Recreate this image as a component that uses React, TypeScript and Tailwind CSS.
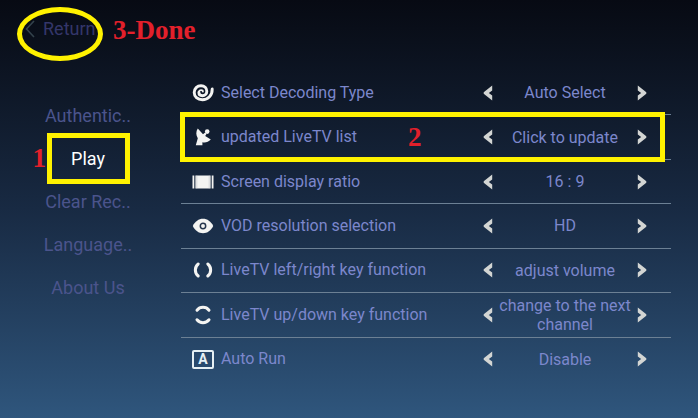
import type { ReactNode } from "react";

interface SettingRowProps {
  icon: ReactNode;
  label: string;
  value: string;
  step?: string;
}

const menu = ["Authentic..", "Play", "Clear Rec..", "Language..", "About Us"];

const SpiralIcon = () => (
  <svg viewBox="0 0 22 20" className="h-5 w-[22px]" fill="none" stroke="#f4f4f2" strokeLinecap="round">
    <path d="M20.2 6C20.4 12.4 16 16.8 10.4 16.8C5.4 16.8 2.2 13.6 2.2 9.5C2.2 5.5 5.2 2.7 9 2.7C12.6 2.7 14.8 5.1 14.8 8.2C14.8 11 12.8 12.7 10.4 12.7C8.2 12.7 6.9 11.3 6.9 9.5" strokeWidth="2.9" />
    <path d="M6.9 9.5C6.9 8 7.9 7.1 9.2 7.1C10.2 7.1 10.9 7.7 10.9 8.6" strokeWidth="1.8" />
  </svg>
);

const DishIcon = () => (
  <svg viewBox="0 0 20 20" className="size-5" fill="#f4f4f2">
    <path d="M4.8 1.6C2.8 4.6 2.8 8.4 4.8 11.2L2.8 18.2H9.4L9.4 15.2C12 15.9 15.4 15.2 17.8 12.6L12.2 9L13.6 6.8L12.2 5.6L10 7.2Z" />
    <circle cx="14.2" cy="4.6" r="2.3" />
  </svg>
);

const ScreenIcon = () => (
  <svg viewBox="0 0 22 14" className="h-[14px] w-[22px]" fill="#f4f4f2">
    <rect x="0.5" y="0.5" width="1.8" height="13" />
    <rect x="3.4" y="0.5" width="15.2" height="13" />
    <rect x="19.7" y="0.5" width="1.8" height="13" />
    <path d="M4.8 0.5V13.5M17.2 0.5V13.5" stroke="#b9bcc4" strokeWidth="0.5" />
  </svg>
);

const EyeIcon = () => (
  <svg viewBox="0 0 22 16" className="h-4 w-[22px]">
    <path d="M0.8 8C3 3.4 6.7 0.8 11 0.8S19 3.4 21.2 8C19 12.6 15.3 15.2 11 15.2S3 12.6 0.8 8Z" fill="#f4f4f2" />
    <circle cx="11" cy="8" r="2.7" fill="none" stroke="#26364d" strokeWidth="1.5" />
  </svg>
);

const SidesIcon = ({ vertical }: { vertical?: boolean }) => (
  <svg
    viewBox="0 0 20 20"
    className={vertical ? "size-5 rotate-90" : "size-5"}
    fill="none"
    stroke="#f4f4f2"
    strokeWidth="3"
    strokeLinecap="round"
  >
    <path d="M5.2 4C1.4 7 1.4 13 5.2 16M14.8 4C18.6 7 18.6 13 14.8 16" />
  </svg>
);

const LetterIcon = () => (
  <span className="flex h-[19px] w-[22px] items-center justify-center rounded-xs border-2 border-[#e6f0f4] text-sm leading-none font-bold text-[#e6f0f4]">
    A
  </span>
);

const Arrow = ({ next, label }: { next?: boolean; label: string }) => (
  <button type="button" aria-label={label} className="flex h-8 w-4 items-center justify-center">
    <svg viewBox="0 0 10 16" className={next ? "h-4 w-[10px] rotate-180" : "h-4 w-[10px]"}>
      <path d="M9.2 0.5V5.6L5.8 8L9.2 10.4V15.5L0.7 8.8V7.2Z" fill="#d3d5d3" />
    </svg>
  </button>
);

const SettingRow = ({ icon, label, value, step }: SettingRowProps) => (
  <li className="relative flex items-center border-b border-[#6c8094] pr-[21px] pl-[11px] last:border-transparent">
    <span className="flex w-[22px] justify-center">{icon}</span>
    <span className="ml-[7px] flex-1 whitespace-nowrap">{label}</span>
    <div className="flex w-[170px] items-center">
      <Arrow label={`Previous: ${label}`} />
      <span className="flex-1 text-center leading-[19px]">{value}</span>
      <Arrow next label={`Next: ${label}`} />
    </div>
    {step && (
      <div className="pointer-events-none absolute -top-[3px] right-[6px] -bottom-[3px] -left-px border-5 border-[#fff200]">
        <span className="absolute inset-y-0 left-[223px] flex items-center font-['Liberation_Serif',serif] text-[27px] leading-none font-bold text-[#e3202b]">
          {step}
        </span>
      </div>
    )}
  </li>
);

export default function App() {
  return (
    <div className="min-h-screen bg-linear-to-b from-[#070a13] via-[#182a43] to-[#2f567d] font-[Roboto,sans-serif]">
      <header className="flex h-[70px] items-start pt-[7px]">
        <div className="relative ml-[17px] flex h-[54px] w-[86px]">
          <button type="button" className="flex h-11 items-center pl-2 text-lg text-[#34366a]">
            <svg viewBox="0 0 10 18" className="mr-2 h-[18px] w-[10px]" fill="none" stroke="#33424c" strokeWidth="1.6">
              <path d="M9 1L1.5 9L9 17" />
            </svg>
            Return
          </button>
          <div className="pointer-events-none absolute inset-0 rounded-[50%] border-5 border-[#fff200]" />
        </div>
        <span className="ml-[10px] pt-[7px] font-['Liberation_Serif',serif] text-[27px] leading-8 font-bold text-[#e3202b]">
          3-Done
        </span>
      </header>

      <div className="flex items-start pr-[27px]">
        <nav className="mt-6 w-[181px] shrink-0 pr-[5px]">
          <ul>
            {menu.map((item) => (
              <li key={item} className="relative flex h-[43px] items-center justify-center">
                <button
                  type="button"
                  className={item === "Play" ? "text-lg text-white" : "text-lg text-[#4b548c]"}
                >
                  {item}
                </button>
                {item === "Play" && (
                  <div className="pointer-events-none absolute -inset-y-1 right-[46px] left-[47px] border-5 border-[#fff200]">
                    <span className="absolute inset-y-0 right-full mr-[6px] flex items-center font-['Liberation_Serif',serif] text-[27px] leading-none font-bold text-[#e3202b]">
                      1
                    </span>
                  </div>
                )}
              </li>
            ))}
          </ul>
        </nav>

        <ul className="grid min-h-[312px] flex-1 auto-rows-fr pt-px text-base text-[#7c87cc]">
          <SettingRow icon={<SpiralIcon />} label="Select Decoding Type" value="Auto Select" />
          <SettingRow icon={<DishIcon />} label="updated LiveTV list" value="Click to update" step="2" />
          <SettingRow icon={<ScreenIcon />} label="Screen display ratio" value="16 : 9" />
          <SettingRow icon={<EyeIcon />} label="VOD resolution selection" value="HD" />
          <SettingRow icon={<SidesIcon />} label="LiveTV left/right key function" value="adjust volume" />
          <SettingRow icon={<SidesIcon vertical />} label="LiveTV up/down key function" value="change to the next channel" />
          <SettingRow icon={<LetterIcon />} label="Auto Run" value="Disable" />
        </ul>
      </div>
    </div>
  );
}
